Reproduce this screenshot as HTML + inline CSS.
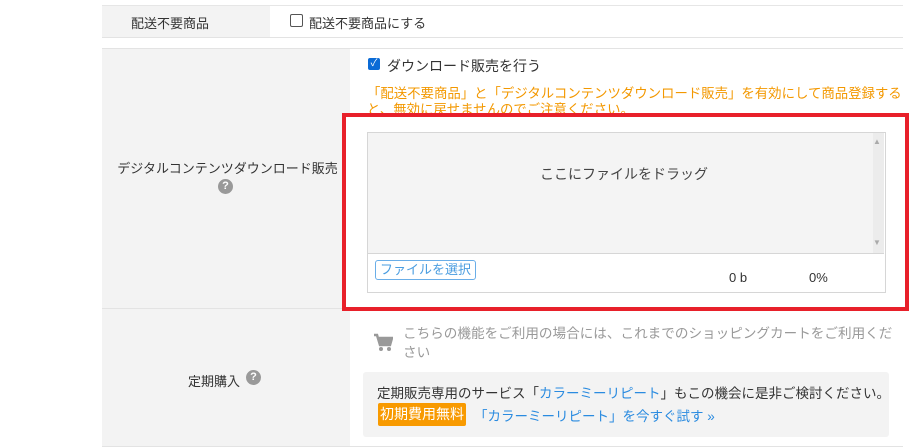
<!DOCTYPE html><html><head><meta charset="utf-8"><style>
body{margin:0;width:924px;height:448px;background:#fff;position:relative;overflow:hidden;font-family:"Liberation Sans","Noto Sans CJK JP",sans-serif;font-size:13px;color:#333}
.a{position:absolute;white-space:nowrap}
</style></head><body>
<div class="a" style="left:102px;top:5px;width:801px;height:1px;background:#e6e6e6"></div>
<div class="a" style="left:102px;top:6px;width:168px;height:31px;background:#f3f3f3"></div>
<div class="a" style="left:102px;top:37px;width:801px;height:1px;background:#e3e3e3"></div>
<div class="a" style="left:131px;top:13px">配送不要商品</div>
<div class="a" style="left:290px;top:14px;width:11px;height:11px;border:1px solid #555;border-radius:2px"></div>
<div class="a" style="left:309px;top:13px">配送不要商品にする</div>

<div class="a" style="left:102px;top:48px;width:801px;height:1px;background:#e3e3e3"></div>
<div class="a" style="left:102px;top:49px;width:248px;height:397px;background:#f3f3f3"></div>
<div class="a" style="left:102px;top:308px;width:801px;height:1px;background:#e3e3e3"></div>
<div class="a" style="left:102px;top:446px;width:801px;height:1px;background:#e3e3e3"></div>

<div class="a" style="left:368px;top:58px;width:12px;height:12px;background:#0b6bd6;border-radius:2px;color:#fff;font-size:10px;line-height:12px;text-align:center">✓</div>
<div class="a" style="left:387px;top:56px;font-size:14px">ダウンロード販売を行う</div>
<div class="a" style="left:367px;top:86px;color:#f39800;font-size:13.4px;line-height:16px">「配送不要商品」と「デジタルコンテンツダウンロード販売」を有効にして商品登録する<br>と、無効に戻せませんのでご注意ください。</div>

<div class="a" style="left:115px;top:158px;width:225px;text-align:center">デジタルコンテンツダウンロード販売</div>
<div class="a" style="left:218px;top:179px;width:15px;height:15px;border-radius:50%;background:#999;color:#fff;font-size:11px;font-weight:bold;text-align:center;line-height:15px">?</div>

<div class="a" style="left:342px;top:113px;width:559px;height:190px;border:4px solid #e8202a;background:#fff"></div>
<div class="a" style="left:367px;top:132px;width:517px;height:159px;border:1px solid #d6d6d6;background:#fff"></div>
<div class="a" style="left:368px;top:133px;width:505px;height:120px;background:#f4f4f4"></div>
<div class="a" style="left:873px;top:133px;width:11px;height:120px;background:#ececec"></div>
<div class="a" style="left:873px;top:137px;font-size:8px;color:#aaa">▲</div>
<div class="a" style="left:873px;top:238px;font-size:8px;color:#aaa">▼</div>
<div class="a" style="left:368px;top:253px;width:516px;height:1px;background:#d6d6d6"></div>
<div class="a" style="left:540px;top:164px;font-size:14px;color:#444">ここにファイルをドラッグ</div>
<div class="a" style="left:375px;top:260px;height:18px;padding:0 4px;border:1px solid #6aaee8;border-radius:3px;color:#4a9de0;font-size:13px;line-height:18px">ファイルを選択</div>
<div class="a" style="left:729px;top:270px;font-size:13px">0 b</div>
<div class="a" style="left:809px;top:270px;font-size:13px">0%</div>

<svg class="a" style="left:373px;top:333px" width="20" height="20" viewBox="0 0 20 20"><path d="M1 2h3l3 10h10l2-7H6" fill="none" stroke="#999" stroke-width="2.5"/><circle cx="8" cy="16" r="2" fill="#999"/><circle cx="16" cy="16" r="2" fill="#999"/><rect x="6" y="6" width="12" height="5" fill="#999"/></svg>
<div class="a" style="left:403px;top:324px;color:#999;font-size:13.6px;line-height:19px">こちらの機能をご利用の場合には、これまでのショッピングカートをご利用くだ<br>さい</div>

<div class="a" style="left:188px;top:371px">定期購入</div>
<div class="a" style="left:246px;top:370px;width:15px;height:15px;border-radius:50%;background:#999;color:#fff;font-size:11px;font-weight:bold;text-align:center;line-height:15px">?</div>

<div class="a" style="left:363px;top:372px;width:526px;height:65px;background:#f3f3f3;border-radius:3px"></div>
<div class="a" style="left:377px;top:382px;font-size:13.5px">定期販売専用のサービス「<span style="color:#2a8be0">カラーミーリピート</span>」もこの機会に是非ご検討ください。</div>
<div class="a" style="left:378px;top:403px;width:88px;height:23px;background:#f89a00;border-radius:2px;color:#fff;font-size:14px;line-height:23px;text-align:center">初期費用無料</div>
<div class="a" style="left:474px;top:405px;color:#2a8be0;font-size:13.5px">「カラーミーリピート」を今すぐ試す »</div>
</body></html>
